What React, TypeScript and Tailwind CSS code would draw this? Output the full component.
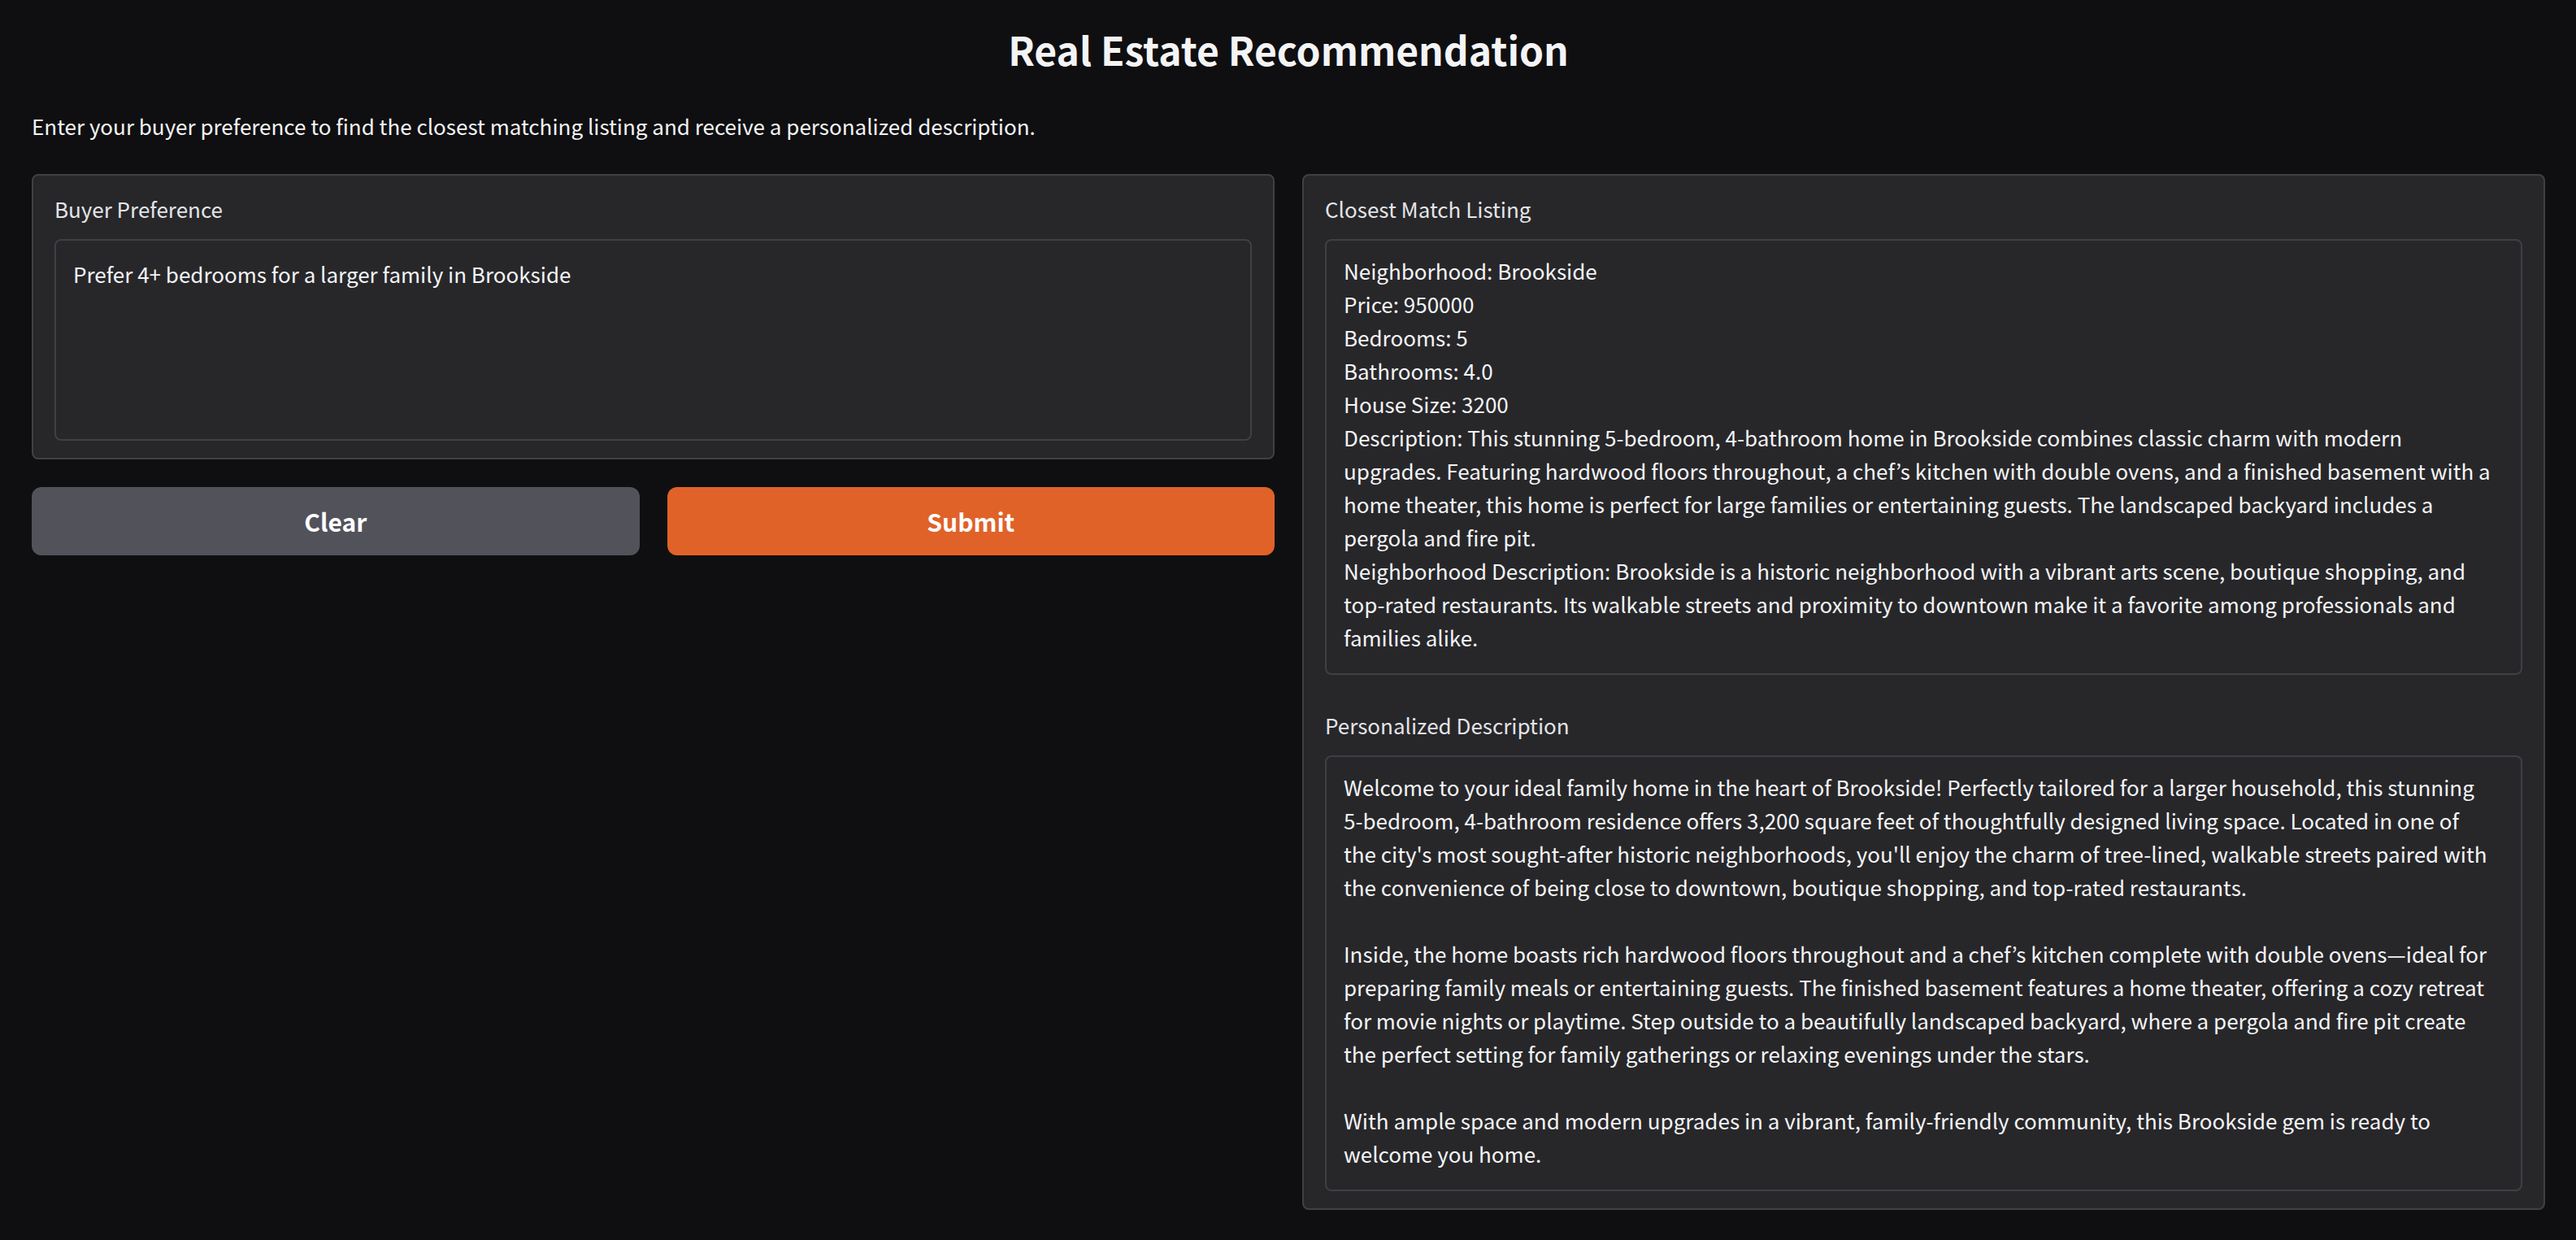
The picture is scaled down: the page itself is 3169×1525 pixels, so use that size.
import { useId, useState } from "react";

const LISTING = `Neighborhood: Brookside
Price: 950000
Bedrooms: 5
Bathrooms: 4.0
House Size: 3200
Description: This stunning 5-bedroom, 4-bathroom home in Brookside combines classic charm with modern upgrades. Featuring hardwood floors throughout, a chef’s kitchen with double ovens, and a finished basement with a home theater, this home is perfect for large families or entertaining guests. The landscaped backyard includes a pergola and fire pit.
Neighborhood Description: Brookside is a historic neighborhood with a vibrant arts scene, boutique shopping, and top-rated restaurants. Its walkable streets and proximity to downtown make it a favorite among professionals and families alike.`;

const PERSONALIZED = `Welcome to your ideal family home in the heart of Brookside! Perfectly tailored for a larger household, this stunning 5-bedroom, 4-bathroom residence offers 3,200 square feet of thoughtfully designed living space. Located in one of the city's most sought-after historic neighborhoods, you'll enjoy the charm of tree-lined, walkable streets paired with the convenience of being close to downtown, boutique shopping, and top-rated restaurants.

Inside, the home boasts rich hardwood floors throughout and a chef’s kitchen complete with double ovens—ideal for preparing family meals or entertaining guests. The finished basement features a home theater, offering a cozy retreat for movie nights or playtime. Step outside to a beautifully landscaped backyard, where a pergola and fire pit create the perfect setting for family gatherings or relaxing evenings under the stars.

With ample space and modern upgrades in a vibrant, family-friendly community, this Brookside gem is ready to welcome you home.`;

type FieldProps = {
  label: string;
  value: string;
  rows: number;
  className: string;
  onChange?: (value: string) => void;
};

function Field({ label, value, rows, className, onChange }: FieldProps) {
  const id = useId();
  return (
    <div className="flex flex-col gap-[17px] px-[26px] pt-5 pb-[21px]">
      <label htmlFor={id} className="text-[26px] leading-[41px] text-[#e4e4e7]">
        {label}
      </label>
      <textarea
        id={id}
        rows={rows}
        value={value}
        readOnly={!onChange}
        onChange={(e) => onChange?.(e.target.value)}
        className={`field-sizing-content block w-full resize-none overflow-hidden rounded-lg border-2 border-[#3f3f46] bg-[#27272a] pr-8 pl-[21px] text-[26px] leading-[41px] text-[#f4f4f5] outline-none ${className}`}
      />
    </div>
  );
}

export default function App() {
  const [preference, setPreference] = useState(
    "Prefer 4+ bedrooms for a larger family in Brookside",
  );
  return (
    <main className="min-h-screen bg-[#0f0f11] pt-7 pr-[38px] pb-9 pl-[39px] font-['Noto_Sans_CJK_KR',sans-serif] text-[#f4f4f5]">
      <h1 className="text-center text-[48px] leading-[64px] font-semibold">
        Real Estate Recommendation
      </h1>
      <p className="mt-[42px] text-[26px] leading-[41px]">
        Enter your buyer preference to find the closest matching listing and receive a personalized
        description.
      </p>
      <div className="mt-[39px] grid grid-cols-2 items-start gap-[34px]">
        <section className="flex flex-col gap-[34px]">
          <div className="rounded-lg border-2 border-[#3f3f46] bg-[#27272a]">
            <Field
              label="Buyer Preference"
              value={preference}
              rows={5}
              className="min-h-[248px] pt-5 pb-[23px]"
              onChange={setPreference}
            />
          </div>
          <div className="grid grid-cols-2 gap-[34px]">
            <button
              type="button"
              onClick={() => setPreference("")}
              className="h-[84px] rounded-xl bg-[#52525b] text-[30px] font-semibold text-white"
            >
              Clear
            </button>
            <button
              type="button"
              className="h-[84px] rounded-xl bg-[#e06229] text-[30px] font-semibold text-white"
            >
              Submit
            </button>
          </div>
        </section>
        <section className="rounded-lg border-2 border-[#3f3f46] bg-[#27272a]">
          <Field label="Closest Match Listing" value={LISTING} rows={12} className="pt-4 pb-6" />
          <Field label="Personalized Description" value={PERSONALIZED} rows={12} className="pt-4 pb-6" />
        </section>
      </div>
    </main>
  );
}
